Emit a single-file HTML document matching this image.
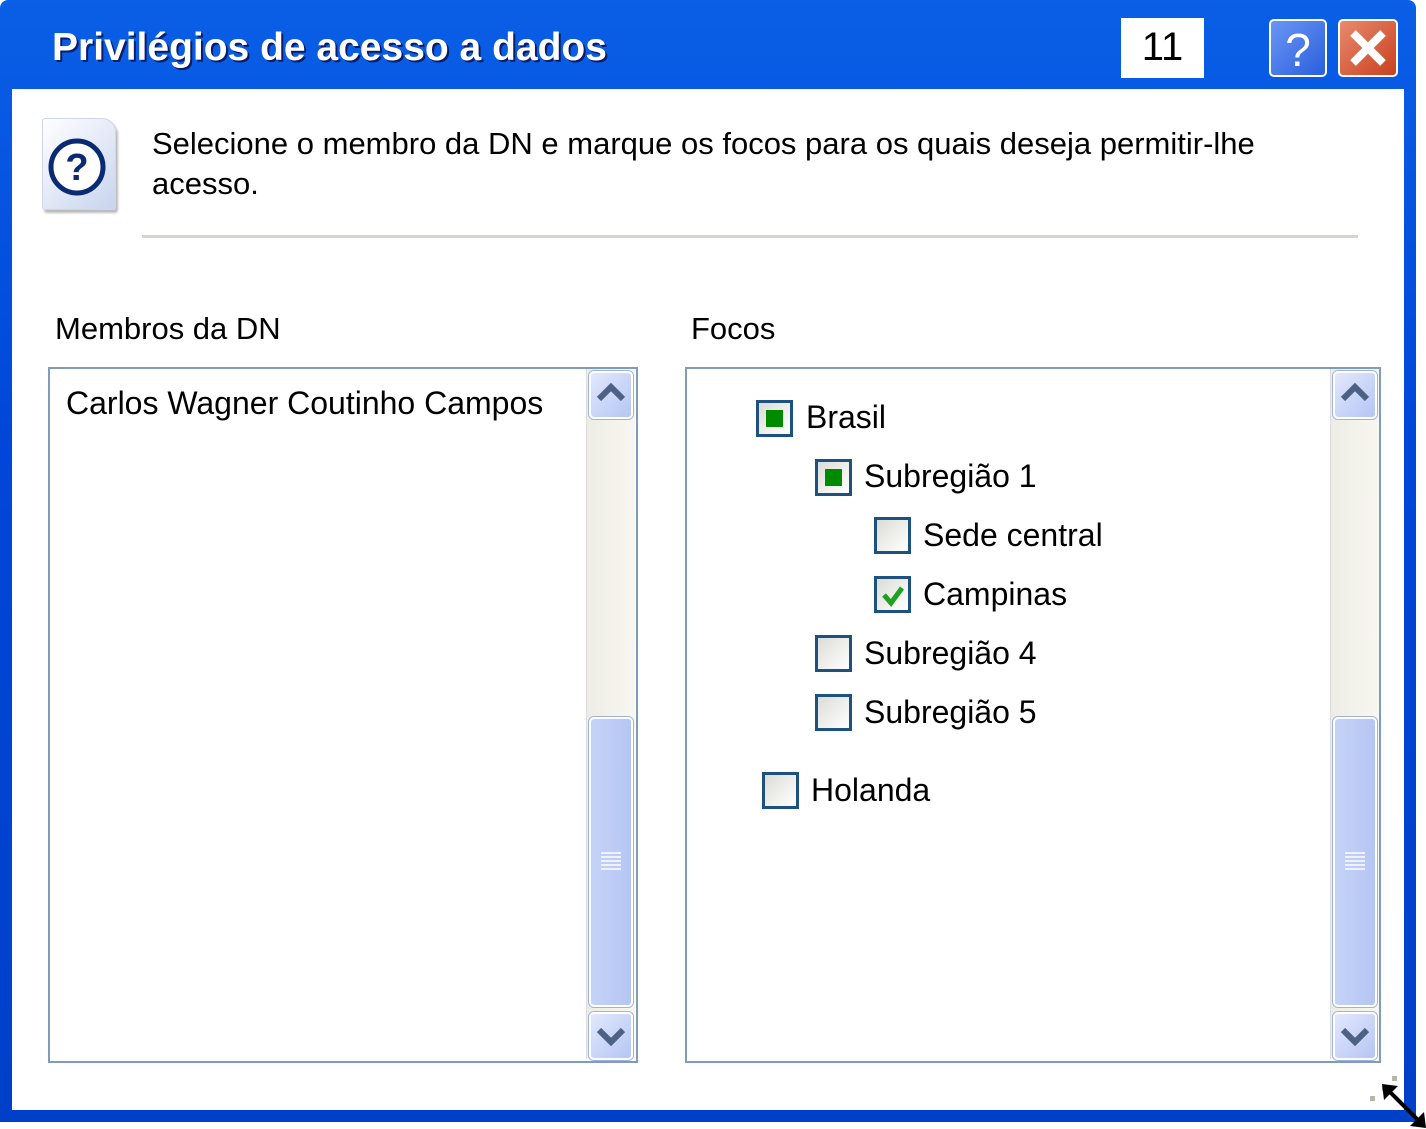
<!DOCTYPE html>
<html><head><style>
body{margin:0;width:1426px;height:1129px;background:#fff;position:relative;overflow:hidden;font-family:"Liberation Sans",sans-serif}
.abs{position:absolute}
.frame{left:0;top:0;width:1416px;height:1122px;background:linear-gradient(#0a5fe6,#0046d8 40%,#0040c8);border-radius:8px 8px 0 0}
.body{left:12px;top:89px;width:1392px;height:1021px;background:#fff}
.title{left:52px;top:26px;color:#fff;font-weight:bold;font-size:39px;text-shadow:2px 2px 0 #0a1c6a}
.sb{background:linear-gradient(90deg,#eeede5,#f7f6f0);border-left:1px solid #ddd}
.btn{border:2px solid #fff;border-radius:5px;background:linear-gradient(135deg,#e2e8fd,#b5c6f4);box-shadow:0 0 0 1px #9fb3e0}
.thumb{border:2px solid #fff;border-radius:5px;background:linear-gradient(90deg,#c6d3f7,#b5c6f4);box-shadow:0 0 0 1px #9fb3e0}
.lb{border:2px solid #7f9db9;background:#fff}
.cb{width:37px;height:37px;box-sizing:border-box;border:3px solid #1c5180;background:linear-gradient(135deg,#dcdcd6,#fff)}
.cb i{position:absolute;left:7px;top:7px;width:17px;height:17px;background:#008a00}
.t{font-size:32px;color:#000}
</style></head><body>
<div class="abs frame"></div>
<div class="abs body"></div>
<div class="abs title">Privilégios de acesso a dados</div>
<div class="abs" style="left:1121px;top:18px;width:83px;height:60px;background:#fff;font-size:40px;text-align:center;line-height:58px">11</div>
<div class="abs" style="left:1269px;top:19px;width:58px;height:58px;border:2px solid #fff;border-radius:5px;background:linear-gradient(135deg,#6a96f5,#2a5fdc);color:#fff;font-size:46px;text-align:center;line-height:58px;box-sizing:border-box">?</div>
<div class="abs" style="left:1338px;top:19px;width:60px;height:58px;border:2px solid #fff;border-radius:5px;background:linear-gradient(135deg,#e98a6e,#c8401f);box-sizing:border-box"><svg width="56" height="54"><path d="M13 12 L43 42 M43 12 L13 42" stroke="#fff" stroke-width="8"/></svg></div>
<div class="abs" style="left:42px;top:118px;width:72px;height:90px;background:linear-gradient(135deg,#fff,#c8d4ee);border:1px solid #cfd6e8;border-radius:3px 14px 3px 3px;box-shadow:2px 3px 2px #bbb"></div>
<svg class="abs" style="left:46px;top:136px" width="62" height="62"><circle cx="31" cy="31" r="26" fill="#fff" stroke="#0a2a74" stroke-width="5"/><text x="31" y="44" font-size="38" font-weight="bold" text-anchor="middle" fill="#0a2a74" font-family="Liberation Sans">?</text></svg>
<div class="abs" style="left:152px;top:124px;font-size:31px;line-height:40px;color:#000;width:1200px">Selecione o membro da DN e marque os focos para os quais deseja permitir-lhe acesso.</div>
<div class="abs" style="left:142px;top:235px;width:1216px;height:3px;background:#d6d5cc"></div>
<div class="abs t" style="left:55px;top:311px;font-size:31px">Membros da DN</div>
<div class="abs t" style="left:691px;top:311px;font-size:31px">Focos</div>

<div class="abs lb" style="left:48px;top:367px;width:586px;height:692px"></div>
<div class="abs t" style="left:66px;top:385px">Carlos Wagner Coutinho Campos</div>
<div class="abs sb" style="left:586px;top:369px;width:48px;height:690px"></div>
<div class="abs btn" style="left:589px;top:371px;width:40px;height:44px"><svg width="40" height="44"><path d="M8 26 L20 14 L32 26" stroke="#4d6185" stroke-width="6" fill="none"/></svg></div>
<div class="abs thumb" style="left:589px;top:717px;width:40px;height:286px"><svg width="40" height="286"><path d="M10 134h20M10 138h20M10 142h20M10 146h20M10 150h20" stroke="#eef2fd" stroke-width="2"/></svg></div>
<div class="abs btn" style="left:589px;top:1012px;width:40px;height:44px"><svg width="40" height="44"><path d="M8 16 L20 28 L32 16" stroke="#4d6185" stroke-width="6" fill="none"/></svg></div>

<div class="abs lb" style="left:685px;top:367px;width:692px;height:692px"></div>
<div class="abs sb" style="left:1330px;top:369px;width:48px;height:690px"></div>
<div class="abs btn" style="left:1333px;top:371px;width:40px;height:44px"><svg width="40" height="44"><path d="M8 26 L20 14 L32 26" stroke="#4d6185" stroke-width="6" fill="none"/></svg></div>
<div class="abs thumb" style="left:1333px;top:717px;width:40px;height:286px"><svg width="40" height="286"><path d="M10 134h20M10 138h20M10 142h20M10 146h20M10 150h20" stroke="#eef2fd" stroke-width="2"/></svg></div>
<div class="abs btn" style="left:1333px;top:1012px;width:40px;height:44px"><svg width="40" height="44"><path d="M8 16 L20 28 L32 16" stroke="#4d6185" stroke-width="6" fill="none"/></svg></div>

<div class="abs cb" style="left:756px;top:400px"><i></i></div><div class="abs t" style="left:806px;top:399px">Brasil</div>
<div class="abs cb" style="left:815px;top:459px"><i></i></div><div class="abs t" style="left:864px;top:458px">Subregião 1</div>
<div class="abs cb" style="left:874px;top:517px"></div><div class="abs t" style="left:923px;top:517px">Sede central</div>
<div class="abs cb" style="left:874px;top:576px"><svg style="position:absolute;left:4px;top:4px" width="24" height="24"><path d="M3 12 L10 20 L21 5" stroke="#21a121" stroke-width="5" fill="none"/></svg></div><div class="abs t" style="left:923px;top:576px">Campinas</div>
<div class="abs cb" style="left:815px;top:635px"></div><div class="abs t" style="left:864px;top:635px">Subregião 4</div>
<div class="abs cb" style="left:815px;top:694px"></div><div class="abs t" style="left:864px;top:694px">Subregião 5</div>
<div class="abs cb" style="left:762px;top:772px"></div><div class="abs t" style="left:811px;top:772px">Holanda</div>

<div class="abs" style="left:1416px;top:0;width:10px;height:1129px;background:#fff"></div>
<div class="abs" style="left:0;top:1122px;width:1426px;height:7px;background:#fff"></div>
<svg class="abs" style="left:1366px;top:1072px" width="60" height="57"><rect x="26" y="4" width="5" height="5" fill="#b5b5a8"/><rect x="16" y="14" width="5" height="5" fill="#b5b5a8"/><rect x="4" y="24" width="5" height="5" fill="#b5b5a8"/><path d="M20 16 L56 52" stroke="#000" stroke-width="4"/><path d="M16 12 L32 14 L18 28Z M60 56 L44 54 L58 40Z" fill="#000"/></svg>
</body></html>
